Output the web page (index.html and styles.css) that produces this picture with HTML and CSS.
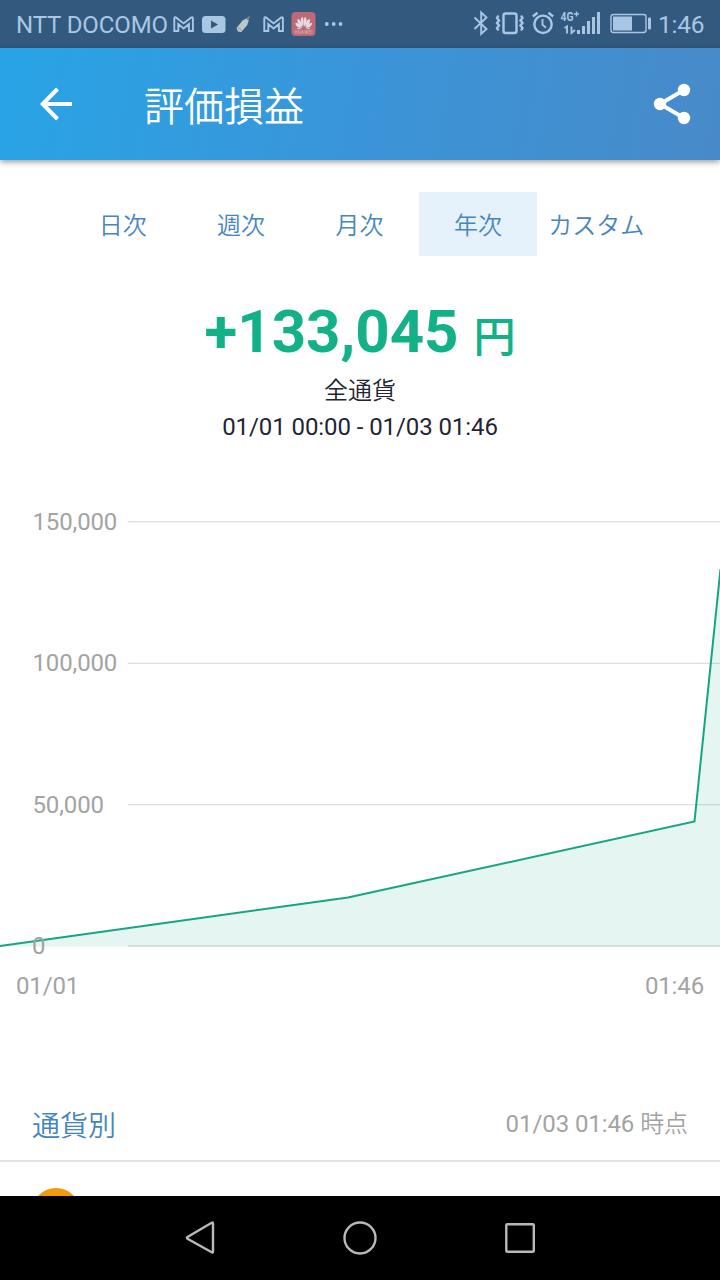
FILE: index.html
```html
<!DOCTYPE html>
<html lang="ja">
<head>
    <meta charset="UTF-8">
    <meta name="viewport" content="width=device-width, initial-scale=1.0">
    <title>評価損益</title>
    <link rel="stylesheet" href="styles.css">
</head>
<body>
    <div class="status-bar">
        <span class="carrier">NTT DOCOMO</span>
        <div class="status-icons">
            <!-- mail -->
            <svg width="28" height="48" viewBox="170 0 28 48"><path class="line" d="M174.300 31V18.200q0-1.300 1.600-.8l7.700 6 7.700-6q1.600-.5 1.600.8V31h-4v-7l-5.300 4.500-5.300-4.500V31z"/></svg>
            <!-- video -->
            <svg width="34" height="48" viewBox="198 0 34 48"><rect class="fill" x="202" y="16" width="23.500" height="17" rx="3.500"/><path class="hole" d="M211 20.500l7 4-7 4z"/></svg>
            <!-- cleaner -->
            <svg width="26" height="48" viewBox="232 0 26 48"><path class="brush" d="M236.500 28l6-7.500 4-2.200 2.300 2-1.500 4.700-6 7-3.500-.5z"/><path class="brush-tip" d="M246 18.500l3.500-2.500.5 1-2 3.500z"/><path class="brush-line" d="M238 27.500l3.500 2.500"/></svg>
            <!-- mail -->
            <svg width="30" height="48" viewBox="258 0 30 48"><path class="line" d="M264.300 31V18.200q0-1.300 1.600-.8l7.700 6 7.700-6q1.600-.5 1.600.8V31h-4v-7l-5.300 4.500-5.300-4.500V31z"/></svg>
            <!-- huawei -->
            <svg width="32" height="48" viewBox="288 0 32 48">
                <rect class="red" x="291.500" y="12" width="24" height="24" rx="4"/>
                <g class="petals">
                    <path d="M303.200 26.500c-2.300-3-3.500-7.500-.8-9.800 1.300 2 1.600 6 .8 9.800z"/>
                    <path d="M304.200 26.500c2.300-3 3.500-7.500.8-9.800-1.300 2-1.600 6-.8 9.800z"/>
                    <path d="M302.300 27c-4-2-5.800-5.500-4.300-8.300 2.500 1.200 4 4.500 4.300 8.300z"/>
                    <path d="M305.100 27c4-2 5.800-5.500 4.300-8.300-2.500 1.200-4 4.500-4.300 8.300z"/>
                    <path d="M301.700 27.700c-4 .2-6.500-2-6.200-5 2.700.3 5 2.200 6.200 5z"/>
                    <path d="M305.700 27.700c4 .2 6.500-2 6.200-5-2.700.3-5 2.200-6.200 5z"/>
                    <path d="M301.500 28.300c-2 1.500-4 1.300-4.800 0z"/>
                    <path d="M305.900 28.300c2 1.500 4 1.300 4.800 0z"/>
                </g>
                <text class="logo-text" x="303.500" y="33.500" text-anchor="middle" textLength="18">HUAWEI</text>
            </svg>
            <svg width="28" height="48" viewBox="320 0 28 48"><circle class="fill" cx="326.800" cy="24" r="1.900"/><circle class="fill" cx="333.700" cy="24" r="1.900"/><circle class="fill" cx="340.500" cy="24" r="1.900"/></svg>
        </div>
        <div class="status-right">
            <!-- bluetooth -->
            <svg width="23" height="48" viewBox="470 0 23 48"><path class="line" d="M474.500 18.500l12 11.500-5.300 4.800V13.500l5.300 5-12 11.500"/></svg>
            <!-- vibrate -->
            <svg width="35" height="48" viewBox="493 0 35 48"><rect class="line thick" x="503.500" y="14.500" width="13" height="19.500" rx="2"/><path class="line thick" d="M498.500 16.500l-1.500 2.500 2 2.500-2 2.500 2 2.500-2 2.500 1.500 2.500M521 16.500l1.500 2.500-2 2.500 2 2.500-2 2.500 2 2.500-1.500 2.500"/></svg>
            <!-- alarm -->
            <svg width="30" height="48" viewBox="528 0 30 48"><circle class="line thick" cx="543" cy="25.300" r="8.700"/><path class="line" d="M542.500 20v5.700l3.500 3"/><path class="line thick" d="M532.800 17.500l4.700-3.800M553.200 17.500l-4.700-3.800"/></svg>
            <!-- signal -->
            <svg width="46" height="48" viewBox="558 0 46 48">
                <text class="net" x="560.500" y="22" textLength="13" lengthAdjust="spacingAndGlyphs">4G</text>
                <path class="line thin" d="M574 15h5M576.500 12.500v5"/>
                <path class="line" d="M564.500 29l2.500-1.500v7M571.500 27.500v6.500l3.500-3"/>
                <path class="fill" d="M577 31h3v4h-3zM582 27h3v8h-3zM587 22h3v13h-3zM592 18h3v17h-3zM597 13h3v22h-3z"/>
            </svg>
            <!-- battery -->
            <svg width="54" height="48" viewBox="604 0 54 48"><rect class="line thin" x="611" y="15.500" width="35" height="18" rx="2.500"/><rect class="fill" x="613" y="17.500" width="19" height="14"/><rect class="fill" x="648" y="18.500" width="3" height="12" rx="1"/></svg>
            <span class="clock">1:46</span>
        </div>
    </div>

    <header class="app-bar">
        <svg class="back" width="40" height="40" viewBox="0 0 40 40"><path d="M36 20H7M21.500 5L6.700 20l14.800 15"/></svg>
        <h1>評価損益</h1>
        <svg class="share" width="40" height="44" viewBox="0 0 40 44"><path d="M32 8L8 22l24 14"/><circle cx="32" cy="8" r="6.200"/><circle cx="8" cy="22" r="6.200"/><circle cx="32" cy="36" r="6.200"/></svg>
    </header>

    <main class="content">
        <nav class="tabs">
            <a class="tab">日次</a>
            <a class="tab">週次</a>
            <a class="tab">月次</a>
            <a class="tab active">年次</a>
            <a class="tab">カスタム</a>
        </nav>

        <section class="summary">
            <div class="amount">+133,045 <span class="unit">円</span></div>
            <p class="currency">全通貨</p>
            <p class="period">01/01 00:00 - 01/03 01:46</p>
        </section>

        <svg class="chart" width="720" height="520" viewBox="0 490 720 520">
            <path class="grid" d="M128 521.700H720M128 663.300H720M128 804.700H720M128 946H720"/>
            <path class="area" d="M0 946L348 897.500L694.500 821.500L720 569V946.500H0z"/>
            <path class="curve" d="M0 946L348 897.500L694.500 821.500L720.500 569"/>
            <text x="32.500" y="530">150,000</text>
            <text x="32.500" y="671">100,000</text>
            <text x="32.500" y="813">50,000</text>
            <text x="32" y="954">0</text>
            <text x="16" y="994">01/01</text>
            <text x="704" y="994" text-anchor="end">01:46</text>
        </svg>

        <section class="list-head">
            <h2>通貨別</h2>
            <span class="as-of">01/03 01:46 <span class="point">時点</span></span>
        </section>
        <div class="list-row">
            <span class="coin"></span>
        </div>
    </main>

    <footer class="nav-bar">
        <svg width="40" height="40" viewBox="0 0 40 40"><path d="M33 5.500v28q0 1.500-1.300.8L7.500 20.700q-1.200-.9 0-1.800L31.700 4.700q1.300-.7 1.300.8z"/></svg>
        <svg width="40" height="40" viewBox="0 0 40 40"><circle cx="20" cy="20" r="15.500"/></svg>
        <svg width="40" height="40" viewBox="0 0 40 40"><rect x="6.300" y="6.300" width="27.500" height="27.500" rx="1"/></svg>
    </footer>
</body>
</html>
```
FILE: styles.css
```css
body {
    font-family: Roboto, "Noto Sans CJK JP", sans-serif;
    background-color: #fff;
    margin: 0;
    height: 1280px;
    display: flex;
    flex-direction: column;
    overflow: hidden;
}

svg {
    display: block;
    flex-shrink: 0;
}

h1, h2, p {
    margin: 0;
    font-weight: normal;
}

/* japanese-only labels */
.app-bar h1, .tab, .currency, .list-head h2, .point {
    font-family: "Noto Sans CJK JP", sans-serif;
    font-weight: 350;
}

/* status bar */
.status-bar {
    display: flex;
    height: 48px;
    flex-shrink: 0;
    align-items: center;
    padding-left: 16px;
    background-color: #32597e;
    color: #a9c7e3;
    font-size: 25px;
    line-height: 48px;
    white-space: nowrap;
}

.carrier {
    width: 154px;
    padding-top: 2px;
    font-size: 24px;
    letter-spacing: -0.1px;
}

.clock {
    padding-top: 2px;
    font-size: 24.5px;
    letter-spacing: -0.2px;
}

.status-icons, .status-right {
    display: flex;
}

.status-right {
    margin-left: 122px;
}

.fill {
    fill: #a9c7e3;
}

.line {
    fill: none;
    stroke: #a9c7e3;
    stroke-width: 1.9;
}

.thick {
    stroke-width: 2.4;
}

.thin {
    stroke-width: 1.4;
}

.hole {
    fill: #32597e;
}

.brush {
    fill: #bac8cd;
}

.brush-tip {
    fill: #8c8578;
}

.brush-line {
    stroke: #8c9499;
}

.red {
    fill: #bd6a76;
}

.petals {
    fill: #e3dfe6;
}

.logo-text {
    fill: #d9a5ad;
    font-size: 4.5px;
    font-weight: bold;
}

.net {
    fill: #a9c7e3;
    font-size: 13px;
    font-weight: bold;
}

/* header */
.app-bar {
    display: flex;
    align-items: center;
    height: 112px;
    flex-shrink: 0;
    box-sizing: border-box;
    padding: 0 28px 0 36px;
    background: linear-gradient(100deg, #28a4e6, #3a95d8 50%, #488ac9);
    box-shadow: 0 2px 6px rgba(0, 0, 0, 0.4);
    color: #fff;
    z-index: 1;
}

.app-bar h1 {
    flex: 1;
    margin-left: 68px;
    font-size: 40px;
    line-height: 56px;
}

.back path {
    fill: none;
    stroke: #fff;
    stroke-width: 4;
}

.share {
    fill: #fff;
    stroke: #fff;
    stroke-width: 0;
}

.share path {
    fill: none;
    stroke-width: 4;
}

/* content */
.content {
    height: 1036px;
    overflow: hidden;
}

.tabs {
    display: flex;
    margin: 32px 64.500px 0 63.500px;
}

.tab {
    flex: 1;
    height: 64px;
    color: #4586be;
    font-size: 24px;
    line-height: 64px;
    text-align: center;
    white-space: nowrap;
}

.tab.active {
    background-color: #e5f2fc;
}

.summary {
    height: 234px;
    padding-top: 40px;
    box-sizing: border-box;
    text-align: center;
    color: #1f2533;
    font-size: 24px;
}

.amount {
    height: 74px;
    color: #12b188;
    font-size: 60px;
    font-weight: bold;
    line-height: 72px;
}

.unit {
    font-size: 42px;
    font-weight: 500;
    -webkit-text-stroke: 0.2px #12b188;
}

.currency {
    line-height: 38px;
}

.period {
    line-height: 38px;
    letter-spacing: -0.08px;
}

.chart text {
    fill: #a3a3a3;
    font-size: 24px;
    letter-spacing: -0.14px;
}

.grid {
    stroke: #dedede;
    stroke-width: 1.3;
}

.area {
    fill: #12a888;
    fill-opacity: 0.11;
}

.curve {
    fill: none;
    stroke: #16a583;
    stroke-width: 2;
}

.list-head {
    display: flex;
    justify-content: space-between;
    align-items: center;
    height: 152px;
    padding: 78px 32px 0;
    box-sizing: border-box;
    border-bottom: 2px solid #e3e3e3;
}

.list-head h2 {
    color: #4586be;
    font-size: 28px;
    line-height: 40px;
}

.as-of {
    color: #a3a3a3;
    font-size: 24px;
    line-height: 36px;
    letter-spacing: -0.08px;
}

.point {
    line-height: 1;
}

.list-row {
    padding: 26px 32px;
}

.coin {
    display: block;
    width: 48px;
    height: 48px;
    border-radius: 50%;
    background-color: #f39a0b;
}

/* bottom navigation */
.nav-bar {
    display: flex;
    justify-content: center;
    align-items: center;
    gap: 120px;
    height: 84px;
    flex-shrink: 0;
    background-color: #000;
}

.nav-bar svg {
    fill: none;
    stroke: #b9b9b9;
    stroke-width: 2.4;
}
```
